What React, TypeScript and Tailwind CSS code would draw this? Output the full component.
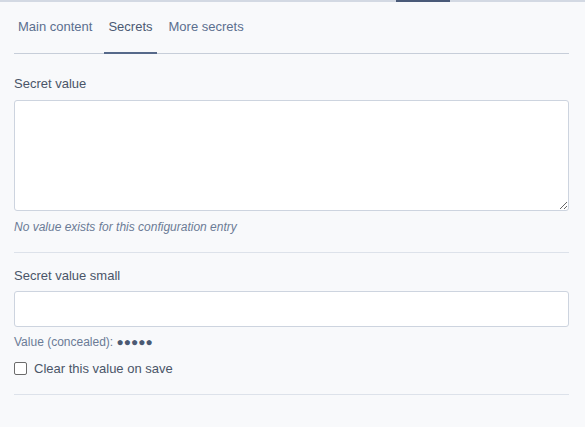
export default function App() {
  return (
    <div
      className="min-h-screen bg-[#f8f9fb] text-[#4a5568]"
      style={{ fontFamily: '"Liberation Sans", Arial, sans-serif' }}
    >
      {/* top strip with active marker */}
      <div className="flex h-[2px] bg-[#d3d9e3]">
        <div className="w-[396px]" />
        <div className="w-[54px] bg-[#4a5a78]" />
      </div>

      <div className="pl-[14px] pr-[16px]">
        <div className="flex border-b border-[#c7ced9] pt-[15px] text-[13px] text-[#5b6f8f]">
          <div className="pl-1 pb-[16px]">Main content</div>
          <div className="ml-[12px] -mb-px border-b-2 border-[#56698a] px-[4px] pb-[15px] text-[#4b5a73]">
            Secrets
          </div>
          <div className="ml-[12px] pb-[16px]">More secrets</div>
        </div>

        <div className="pt-[22px]">
          <label className="block text-[13px] leading-[16px] text-[#4a5568]">Secret value</label>
          <textarea className="mt-[8px] block h-[111px] w-full resize-y rounded-[3px] border border-[#cdd4df] bg-white" />
          <p className="mt-[8px] text-[12px] italic leading-[16px] text-[#6b7b96]">
            No value exists for this configuration entry
          </p>
        </div>

        <div className="mt-[17px] border-t border-[#dde2ea]" />

        <div className="pt-[15px]">
          <label className="block text-[13px] leading-[16px] text-[#4a5568]">Secret value small</label>
          <input className="mt-[7px] block h-[36px] w-full rounded-[3px] border border-[#cdd4df] bg-white" />
          <p className="mt-[7px] text-[12px] leading-[16px] text-[#6b7b96]">
            Value (concealed): <span className="text-[#4b5a73]">●●●●●</span>
          </p>
          <label className="mt-[11px] flex items-center gap-[7px] text-[13px] leading-[16px] text-[#4a5568]">
            <span className="block h-[13px] w-[13px] rounded-[2px] border border-[#6b6b6b] bg-white" />
            Clear this value on save
          </label>
        </div>

        <div className="mt-[17px] border-t border-[#dde2ea]" />
      </div>
    </div>
  )
}
